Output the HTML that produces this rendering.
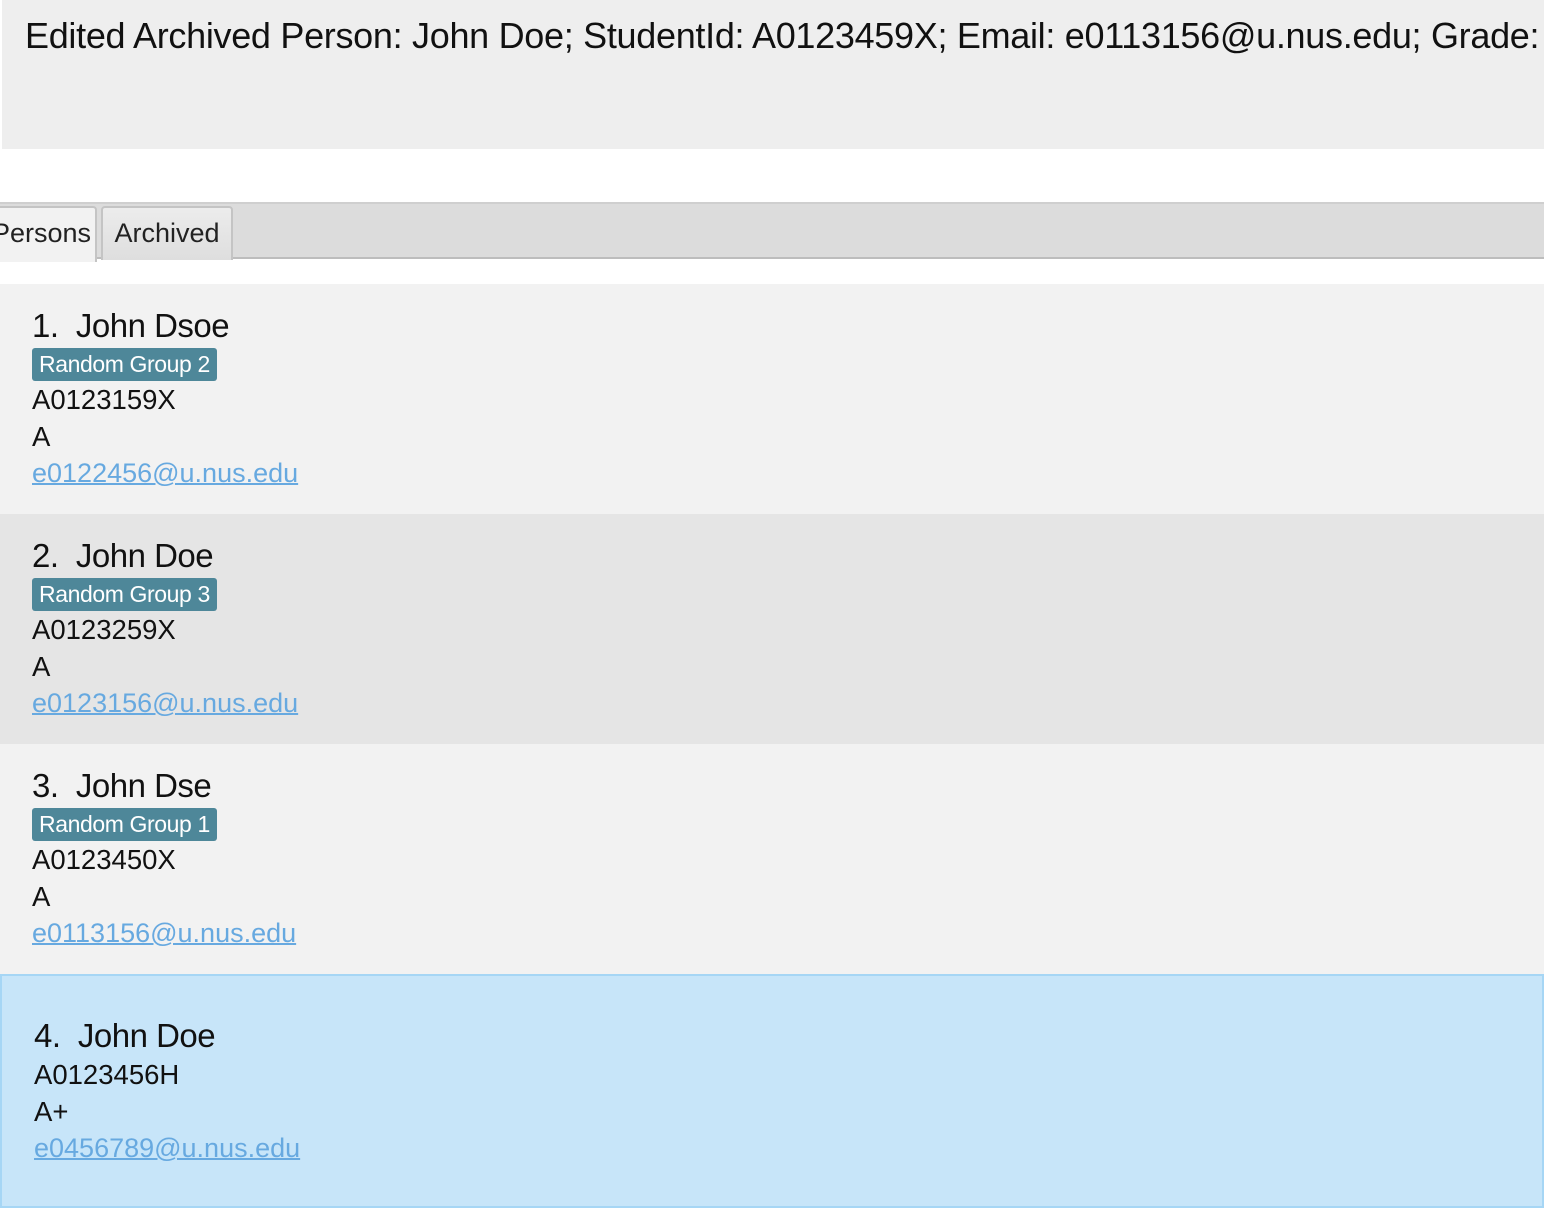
<!DOCTYPE html>
<html><head><meta charset="utf-8"><style>
*{margin:0;padding:0;box-sizing:border-box}
body{width:1544px;height:1222px;overflow:hidden;background:#fff;font-family:"Liberation Sans",sans-serif;position:relative;color:#111}
.top{position:absolute;left:2px;top:0;width:1542px;height:149px;background:#eeeeee;overflow:hidden}
.top div{position:absolute;left:23px;top:15px;font-size:36px;white-space:nowrap;letter-spacing:-0.3px;color:#111}
.tabbar{position:absolute;left:0;top:202px;width:1544px;height:57px;background:#dcdcdc;border-top:2px solid #cfcfcf;border-bottom:2px solid #bdbdbd}
.tab{position:absolute;top:2px;height:54px;font-size:27px;line-height:50px;border:2px solid #c4c4c4;border-bottom:none;border-radius:4px 4px 0 0;color:#222}
.t1{left:-4px;width:101px;background:#f2f2f2;padding-left:0;text-indent:-6px;height:56px}
.t2{left:101px;width:132px;background:linear-gradient(#ececec,#dedede);text-align:center}
.card{position:absolute;left:0;width:1544px;height:230px}
.card .in{position:absolute;left:32px;top:22px}
.name{font-size:33px;letter-spacing:-0.5px;height:40px;line-height:40px}
.tag{display:inline-block;background:#4e8799;color:#fff;font-size:23px;height:33px;line-height:33px;padding:0 7px;border-radius:3px;margin-top:2px;letter-spacing:-0.4px}
.l{font-size:27.5px;height:37px;line-height:37px}
.e{color:#67a9e0;text-decoration:underline;text-decoration-thickness:2px;font-size:27px}
</style></head><body>
<div class="top"><div>Edited Archived Person: John Doe; StudentId: A0123459X; Email: e0113156@u.nus.edu; Grade: A+</div></div>
<div class="tabbar"><div class="tab t1">Persons</div><div class="tab t2">Archived</div></div>

<div class="card" style="top:284px;background:#f2f2f2"><div class="in">
<div class="name">1.&nbsp; John Dsoe</div><div class="tag">Random Group 2</div>
<div class="l">A0123159X</div><div class="l">A</div><div class="l e">e0122456@u.nus.edu</div></div></div>

<div class="card" style="top:514px;background:#e5e5e5"><div class="in">
<div class="name">2.&nbsp; John Doe</div><div class="tag">Random Group 3</div>
<div class="l">A0123259X</div><div class="l">A</div><div class="l e">e0123156@u.nus.edu</div></div></div>

<div class="card" style="top:744px;background:#f2f2f2"><div class="in">
<div class="name">3.&nbsp; John Dse</div><div class="tag">Random Group 1</div>
<div class="l">A0123450X</div><div class="l">A</div><div class="l e">e0113156@u.nus.edu</div></div></div>

<div class="card" style="top:974px;height:234px;background:#c7e5f9;border:2px solid #a6d6f5"><div class="in" style="left:32px;top:40px">
<div class="name">4.&nbsp; John Doe</div>
<div class="l">A0123456H</div><div class="l">A+</div><div class="l e">e0456789@u.nus.edu</div></div></div>
</body></html>
